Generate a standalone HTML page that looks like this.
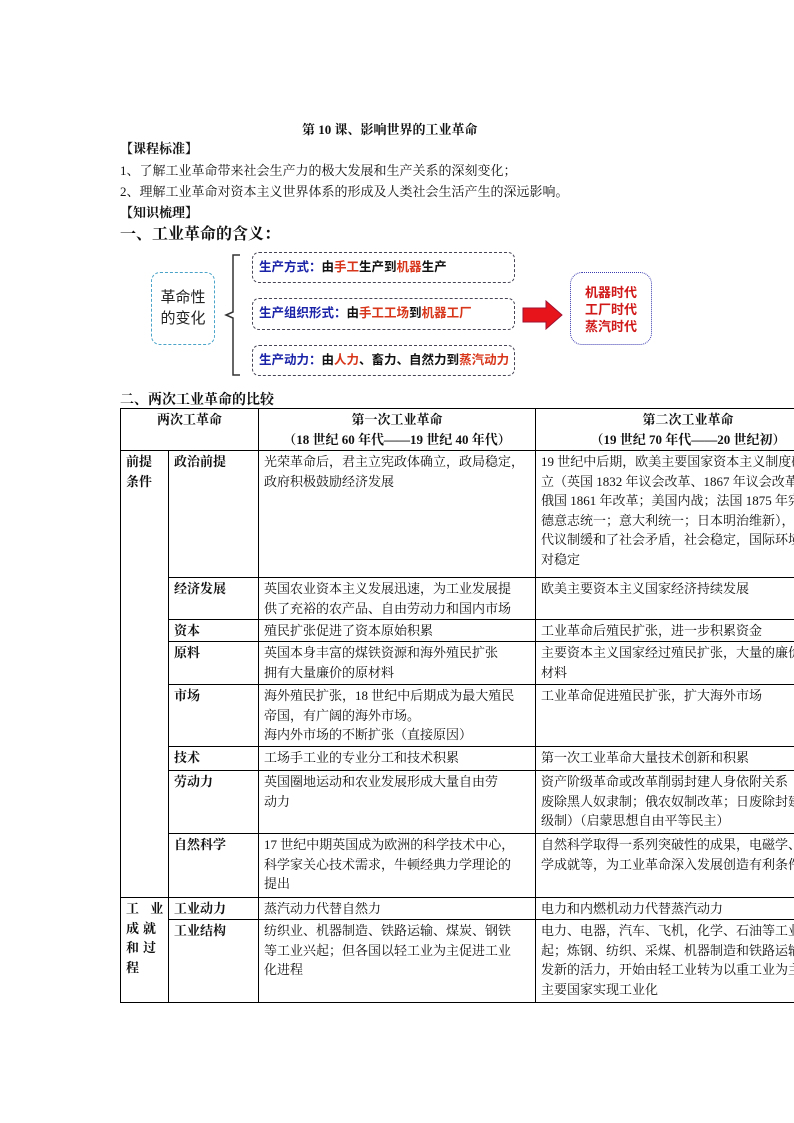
<!DOCTYPE html>
<html><head><meta charset="utf-8"><style>
body{margin:0;background:#fff;width:794px;height:1123px;position:relative;overflow:hidden;font-family:"Liberation Serif","Noto Serif CJK SC","Noto Sans CJK SC",serif;color:#111;}
.a{position:absolute;white-space:nowrap;}
.b{font-weight:bold;}
.box{position:absolute;border:1.5px dashed #445;border-radius:7px;box-sizing:border-box;font-family:"Liberation Sans","Noto Sans CJK SC",sans-serif;font-weight:bold;font-size:12.5px;padding-left:6px;line-height:28px;}
.bl{color:#1a23a8}.rd{color:#d8361a}
table{position:absolute;left:120px;top:408px;border-collapse:collapse;font-size:13px;line-height:19.5px;table-layout:fixed;width:720px;}
td{border:1px solid #000;vertical-align:top;padding:1px 5px 0 5px;overflow:hidden;white-space:nowrap;}
td.h{font-weight:bold;}
</style></head><body>
<div class="a b" style="left:302px;top:119px;font-size:13px;">第 10 课、影响世界的工业革命</div>
<div class="a b" style="left:120px;top:138px;font-size:13px;">【课程标准】</div>
<div class="a" style="left:120px;top:160px;font-size:13px;">1、了解工业革命带来社会生产力的极大发展和生产关系的深刻变化；</div>
<div class="a" style="left:120px;top:181px;font-size:13px;">2、理解工业革命对资本主义世界体系的形成及人类社会生活产生的深远影响。</div>
<div class="a b" style="left:120px;top:202px;font-size:13px;">【知识梳理】</div>
<div class="a b" style="left:120px;top:221px;font-size:16px;">一、工业革命的含义：</div>

<div style="position:absolute;left:151px;top:272px;width:64px;height:73px;border:1.5px dashed #4aa3c8;border-radius:9px;box-sizing:border-box;font-family:'Liberation Sans','Noto Sans CJK SC',sans-serif;font-size:15px;line-height:21px;text-align:center;padding-top:14px;color:#222;">革命性<br>的变化</div>
<svg class="a" style="left:222px;top:252px" width="30" height="126"><path d="M18 3 H11 V60 L4 63 L11 66 V123 H18" fill="none" stroke="#333" stroke-width="1.5"/></svg>
<div class="box" style="left:252px;top:252px;width:263px;height:31px;"><span class="bl">生产方式：</span>由<span class="rd">手工</span>生产到<span class="rd">机器</span>生产</div>
<div class="box" style="left:252px;top:298px;width:263px;height:32px;"><span class="bl">生产组织形式：</span>由<span class="rd">手工工场</span>到<span class="rd">机器工厂</span></div>
<div class="box" style="left:252px;top:345px;width:263px;height:31px;"><span class="bl">生产动力：</span>由<span class="rd">人力</span>、畜力、自然力到<span class="rd">蒸汽动力</span></div>
<svg class="a" style="left:522px;top:300px" width="42" height="30"><path d="M1 8 H24 V1 L40 15 L24 29 V22 H1 Z" fill="#e8141c" stroke="#a01030" stroke-width="1"/></svg>
<div style="position:absolute;left:570px;top:272px;width:82px;height:73px;border:1.5px dotted #3a3ab0;border-radius:12px;box-sizing:border-box;font-family:'Liberation Sans','Noto Sans CJK SC',sans-serif;font-weight:bold;font-size:13px;line-height:17px;text-align:center;padding-top:11px;color:#d01818;">机器时代<br>工厂时代<br>蒸汽时代</div>

<div class="a b" style="left:120px;top:389px;font-size:14px;">二、两次工业革命的比较</div>

<table>
<colgroup><col style="width:48px"><col style="width:90px"><col style="width:277px"><col style="width:305px"></colgroup>
<tr><td colspan="2" class="h" style="text-align:center;height:40px">两次工革命</td><td class="h" style="text-align:center">第一次工业革命<br>（18 世纪 60 年代——19 世纪 40 年代）</td><td class="h" style="text-align:center">第二次工业革命<br>（19 世纪 70 年代——20 世纪初）</td></tr>
<tr><td rowspan="8" class="h">前提<br>条件</td><td class="h" style="height:125px">政治前提</td><td>光荣革命后，君主立宪政体确立，政局稳定，<br>政府积极鼓励经济发展</td><td>19 世纪中后期，欧美主要国家资本主义制度确<br>立（英国 1832 年议会改革、1867 年议会改革；<br>俄国 1861 年改革；美国内战；法国 1875 年宪法；<br>德意志统一；意大利统一；日本明治维新），<br>代议制缓和了社会矛盾，社会稳定，国际环境相<br>对稳定</td></tr>
<tr><td class="h" style="height:40px">经济发展</td><td>英国农业资本主义发展迅速，为工业发展提<br>供了充裕的农产品、自由劳动力和国内市场</td><td>欧美主要资本主义国家经济持续发展</td></tr>
<tr><td class="h" style="height:20px">资本</td><td>殖民扩张促进了资本原始积累</td><td>工业革命后殖民扩张，进一步积累资金</td></tr>
<tr><td class="h" style="height:41px">原料</td><td>英国本身丰富的煤铁资源和海外殖民扩张<br>拥有大量廉价的原材料</td><td>主要资本主义国家经过殖民扩张，大量的廉价原<br>材料</td></tr>
<tr><td class="h" style="height:60px">市场</td><td>海外殖民扩张，18 世纪中后期成为最大殖民<br>帝国，有广阔的海外市场。<br>海内外市场的不断扩张（直接原因）</td><td>工业革命促进殖民扩张，扩大海外市场</td></tr>
<tr><td class="h" style="height:22px">技术</td><td>工场手工业的专业分工和技术积累</td><td>第一次工业革命大量技术创新和积累</td></tr>
<tr><td class="h" style="height:61px">劳动力</td><td>英国圈地运动和农业发展形成大量自由劳<br>动力</td><td>资产阶级革命或改革削弱封建人身依附关系（美<br>废除黑人奴隶制；俄农奴制改革；日废除封建等<br>级制）（启蒙思想自由平等民主）</td></tr>
<tr><td class="h" style="height:62px">自然科学</td><td>17 世纪中期英国成为欧洲的科学技术中心，<br>科学家关心技术需求，牛顿经典力学理论的<br>提出</td><td>自然科学取得一系列突破性的成果，电磁学、化<br>学成就等，为工业革命深入发展创造有利条件</td></tr>
<tr><td rowspan="2" class="h" style="letter-spacing:4px">工 业<br>成就<br>和过<br>程</td><td class="h" style="height:20px">工业动力</td><td>蒸汽动力代替自然力</td><td>电力和内燃机动力代替蒸汽动力</td></tr>
<tr><td class="h" style="height:81px">工业结构</td><td>纺织业、机器制造、铁路运输、煤炭、钢铁<br>等工业兴起；但各国以轻工业为主促进工业<br>化进程</td><td>电力、电器，汽车、飞机，化学、石油等工业兴<br>起；炼钢、纺织、采煤、机器制造和铁路运输焕<br>发新的活力，开始由轻工业转为以重工业为主，<br>主要国家实现工业化</td></tr>
</table>
</body></html>
